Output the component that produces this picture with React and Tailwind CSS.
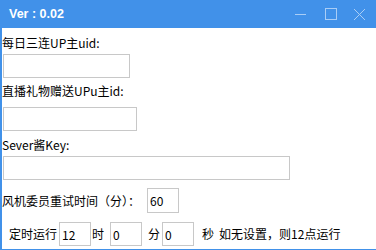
import React, { useState } from 'react';

// Small desktop settings window: title bar + form
const font = { fontFamily: '"Noto Sans CJK SC", "Noto Sans", sans-serif' };

function Field({ value, onChange, className }) {
    return (
        <input
            value={value}
            onChange={(e) => onChange(e.target.value)}
            className={`h-[24px] border border-[#c8c8c8] bg-white px-[2px] text-[12px] text-black outline-none ${className}`}
        />
    );
}

export default function App() {
    const [uid, setUid] = useState('');
    const [liveUid, setLiveUid] = useState('');
    const [key, setKey] = useState('');
    const [retry, setRetry] = useState('60');
    const [hour, setHour] = useState('12');
    const [minute, setMinute] = useState('0');
    const [second, setSecond] = useState('0');

    return (
        <div className="w-[376px] h-[250px] flex flex-col bg-white overflow-hidden" style={font}>
            {/* Title bar */}
            <div className="h-[28px] bg-[#4191e9] flex items-center justify-between pl-[9px]">
                <span className="text-white font-bold text-[12.5px]" style={{ fontFamily: '"Liberation Sans", sans-serif' }}>Ver : 0.02</span>
                <div className="flex items-center h-full">
                    <button className="w-[29px] h-full flex items-center justify-center">
                        <svg width="11" height="11" viewBox="0 0 11 11"><path d="M0 5.5h11" stroke="#a9cdf6" strokeWidth="1" /></svg>
                    </button>
                    <button className="w-[29px] h-full flex items-center justify-center ml-[1px]">
                        <svg width="12" height="12" viewBox="0 0 12 12"><rect x="0.5" y="0.5" width="11" height="11" fill="none" stroke="#a9cdf6" strokeWidth="1" /></svg>
                    </button>
                    <button className="w-[29px] h-full flex items-center justify-center mr-[2px]">
                        <svg width="11" height="11" viewBox="0 0 11 11"><path d="M0 0L11 11M11 0L0 11" stroke="#a9cdf6" strokeWidth="1" /></svg>
                    </button>
                </div>
            </div>

            {/* Body */}
            <div className="flex-1 flex flex-col border-l-2 border-b border-[#4191e9] text-black text-[12px]">
                <p className="mt-[7px] leading-[16px]">每日三连UP主uid:</p>
                <Field value={uid} onChange={setUid} className="mt-[3px] ml-[1px] w-[127px]" />

                <p className="mt-[5px] leading-[16px]">直播礼物赠送UPu主id:</p>
                <Field value={liveUid} onChange={setLiveUid} className="mt-[8px] ml-[1px] w-[134px]" />

                <p className="mt-[6px] leading-[16px]">Sever酱Key:</p>
                <Field value={key} onChange={setKey} className="mt-[3px] ml-[1px] w-[287px]" />

                <div className="mt-[8px] flex items-center">
                    <span>风机委员重试时间（分）：</span>
                    <Field value={retry} onChange={setRetry} className="ml-[7px] w-[32px] h-[25px]" />
                </div>

                <div className="mt-[9px] flex items-center pl-[7px]">
                    <span>定时运行</span>
                    <Field value={hour} onChange={setHour} className="ml-[2px] w-[32px]" />
                    <span className="ml-[1px]">时</span>
                    <Field value={minute} onChange={setMinute} className="ml-[6px] w-[32px]" />
                    <span className="ml-[6px]">分</span>
                    <Field value={second} onChange={setSecond} className="ml-[2px] w-[32px]" />
                    <span className="ml-[8px]">秒</span>
                    <span className="ml-[5px]">如无设置，则12点运行</span>
                </div>
            </div>
        </div>
    );
}
